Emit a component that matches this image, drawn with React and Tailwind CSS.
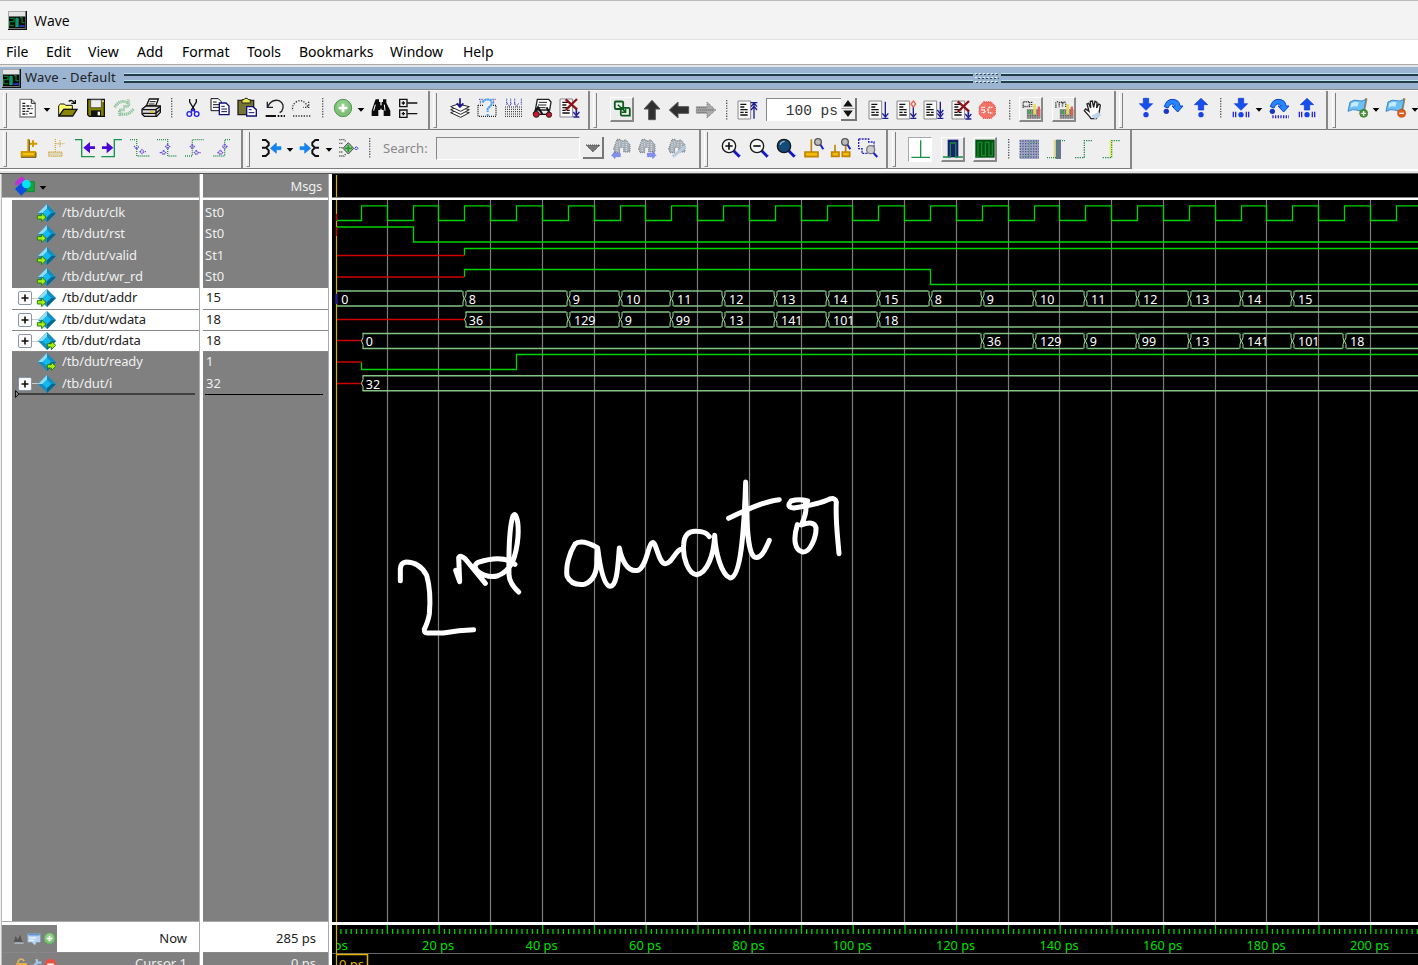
import React from "react";

/* ---------- shared pieces ---------- */

const Ic = ({ m = "", s = "w-5 h-5", children }) => (
  <svg className={`${m} ${s} shrink-0 overflow-visible`} viewBox="0 0 60 60" fill="none">
    {children}
  </svg>
);

const Caret = ({ m }) => (
  <svg className={`${m} mt-1 h-2 w-2 shrink-0`} viewBox="0 0 24 24">
    <path d="M2 6H22L12 17Z" fill="#000" />
  </svg>
);

const Handle = ({ m }) => (
  <div className={`${m} h-[35px] w-1 shrink-0 self-center border-b border-l border-r border-b-[#8a8a8a] border-l-white border-r-[#808080]`} />
);

const Sep = ({ m }) => (
  <svg className={`${m} h-5 w-[3px] shrink-0`} viewBox="0 0 3 20">
    <path d="M0.7 0V20" stroke="#555" strokeWidth="1.3" strokeDasharray="1.3 1.3" />
  </svg>
);

const Group = ({ w, children }) => (
  <div className={`${w} flex shrink-0 items-center border-b border-r-2 border-b-[#7a7a7a] border-r-[#888]`}>{children}</div>
);

const Btn = ({ m, children, sunken }) => (
  <div
    className={`${m} flex h-[25px] w-6 shrink-0 items-center justify-center border ${
      sunken ? "border-b-white border-r-white border-l-[#aaa] border-t-[#aaa] bg-white" : "border-b-2 border-r-2 border-b-[#888] border-r-[#888] border-l-white border-t-white bg-[#ececec]"
    }`}
  >
    {children}
  </div>
);

const WaveLogo = ({ c }) => (
  <svg className={`${c} shrink-0`} viewBox="0 0 57 57">
    <path d="M0 0H54V54H0Z" fill="#a8a8a8" />
    <path d="M3 3H52V15H3Z" fill="#e4e4e4" />
    <path d="M3 17H52V52H3Z" fill="#050808" />
    <path d="M5 22H18V32H5V44H18M23 22V46H31V22M36 20H42V35H50M36 46H50" stroke="#08752f" strokeWidth="4" fill="none" />
    <path d="M27 20V48" stroke="#12c5c9" strokeWidth="4" />
    <path d="M34 45H50" stroke="#2b2bd0" strokeWidth="5" />
    <path d="M55 0V56H0" stroke="#111" strokeWidth="4" fill="none" />
  </svg>
);

/* ---------- icon drawings ---------- */

const Page = () => (
  <>
    <path d="M3 3H41V57H3Z" fill="#f8f8f8" stroke="#888" strokeWidth="3" />
    <path d="M10 13H28M10 21H22M10 29H32M10 37H20M10 45H32M24 37H32" stroke="#111" strokeWidth="4" />
  </>
);
const NewDoc = () => (
  <>
    <path d="M6 4H40L52 16V57H6Z" fill="#fff" stroke="#808080" strokeWidth="4" />
    <path d="M40 4V16H52" stroke="#222" strokeWidth="3" />
    <path d="M13 16H25M13 24H40M13 32H22M28 32H44M13 40H32M13 48H28M34 46H46" stroke="#222" strokeWidth="4" strokeDasharray="9 3" />
  </>
);
const Open = () => (
  <>
    <path d="M2 53V23L7 18H19L23 22H43V34H18L3 53Z" fill="#ffff72" stroke="#111" strokeWidth="3" />
    <path d="M3 54L17 34H57L44 54Z" fill="#8a8505" stroke="#111" strokeWidth="4" />
    <path d="M32 10Q43 3 49 15M40 16H52V6" stroke="#111" strokeWidth="4" />
  </>
);
const Save = () => (
  <>
    <path d="M5 4H55V55H10L5 50Z" fill="#858000" stroke="#111" strokeWidth="4" />
    <path d="M14 5H46V29H14Z" fill="#efefef" stroke="#333" strokeWidth="2" />
    <path d="M15 37H45V55H15Z" fill="#111" />
    <path d="M35 41H42V52H35Z" fill="#fff" />
    <path d="M49 7H53V12H49Z" fill="#fff" />
  </>
);
const Refresh = () => (
  <g stroke="#8fc39a" strokeWidth="9" strokeDasharray="4 2">
    <path d="M2 28Q16 3 42 14M28 26L45 24L42 4" />
    <path d="M58 33Q42 56 18 46M32 35L16 36L18 55" />
  </g>
);
const Print = () => (
  <>
    <path d="M16 24L25 3H52L44 24Z" fill="#fff" stroke="#111" strokeWidth="4" />
    <path d="M26 11H44M23 18H41" stroke="#111" strokeWidth="3" />
    <path d="M3 34L15 24H58V43L47 55H10L3 48Z" fill="#ddd" stroke="#111" strokeWidth="4" />
    <path d="M5 35H44L57 26M5 46H45L57 35M45 35V54" stroke="#111" strokeWidth="4" />
    <path d="M27 42H38" stroke="#d7cf00" strokeWidth="5" />
  </>
);
const Cut = () => (
  <>
    <path d="M20 3V12L36 38M40 3V12L24 38" stroke="#111" strokeWidth="4" />
    <circle cx="19" cy="48" r="7" stroke="#2020f0" strokeWidth="4" />
    <circle cx="41" cy="48" r="7" stroke="#2020f0" strokeWidth="4" />
    <path d="M25 42L30 34L35 42" stroke="#2020f0" strokeWidth="4" />
  </>
);
const Copy = () => (
  <>
    <path d="M3 2H25L34 11V38H3Z" fill="#fff" stroke="#111" strokeWidth="3" />
    <path d="M9 12H20M9 20H27M9 28H27" stroke="#111" strokeWidth="3" />
    <path d="M28 15H48L57 24V50H28Z" fill="#fff" stroke="#10107c" strokeWidth="4" />
    <path d="M34 25H44M34 33H51M34 41H51" stroke="#10107c" strokeWidth="3" />
  </>
);
const Paste = () => (
  <>
    <path d="M3 7H50V50H3Z" fill="#767433" stroke="#222" strokeWidth="4" />
    <path d="M15 5H21L24 1H31L34 5H40V15H15Z" fill="#ece84a" stroke="#222" strokeWidth="3" />
    <path d="M29 26H48L58 35V54H29Z" fill="#fff" stroke="#10107c" strokeWidth="4" />
    <path d="M35 35H44M35 44H52" stroke="#10107c" strokeWidth="3" />
  </>
);
const Undo = () => (
  <>
    <path d="M8 26Q20 2 42 8Q62 18 50 40L44 44M7 11V28H24" stroke="#222" strokeWidth="4" />
    <path d="M2 54H33" stroke="#111" strokeWidth="6" />
    <path d="M38 54H60" stroke="#111" strokeWidth="6" strokeDasharray="5 4" />
  </>
);
const Redo = () => (
  <>
    <path d="M50 26Q38 2 18 10Q0 22 6 38M53 11V28H36" stroke="#333" strokeWidth="4" strokeDasharray="4 4" />
    <path d="M6 54H60" stroke="#333" strokeWidth="4" strokeDasharray="4 4" />
  </>
);
const Plus = () => (
  <>
    <circle cx="30" cy="30" r="26" fill="#7fc078" stroke="#4d9a4d" strokeWidth="3" />
    <circle cx="30" cy="24" r="18" fill="#9ad493" opacity=".6" />
    <path d="M30 17V43M17 30H43" stroke="#fff" strokeWidth="8" />
  </>
);
const Binoc = () => (
  <>
    <path d="M14 4H24V12H28V36H22V54H2V38L10 14ZM36 4H46V14L58 38V54H38V36H32V12H36Z" fill="#0a0a0a" />
    <path d="M24 22H36V32H24Z" fill="#0a0a0a" />
    <path d="M8 38L13 20M42 38L40 20" stroke="#fff" strokeWidth="3" />
  </>
);
const Tree = () => (
  <>
    <path d="M5 4H27V26H5ZM5 36H27V58H5Z" stroke="#111" strokeWidth="4" />
    <path d="M11 15H21M16 10V20M11 47H21M16 42V52M28 15H58M28 47H58" stroke="#111" strokeWidth="4" />
  </>
);
const Stack = () => (
  <>
    <path d="M2 44L24 36L58 44L32 58Z" fill="#fff" stroke="#222" strokeWidth="3" />
    <path d="M2 35L24 27L58 35L32 49Z" fill="#fff" stroke="#222" strokeWidth="3" />
    <path d="M2 26L24 18L58 26L32 40Z" fill="#fff" stroke="#222" strokeWidth="3" />
    <path d="M30 1V24M20 16L30 27L40 16" stroke="#17178f" strokeWidth="5" />
  </>
);
const Query = () => (
  <>
    <path d="M3 22H18M42 22H57V55H3V22" stroke="#222" strokeWidth="4" strokeDasharray="3 3" />
    <path d="M6 4H18M44 4H56M10 8V18M50 8V18" stroke="#3030a0" strokeWidth="3" strokeDasharray="3 2" />
    <path d="M16 13Q24 2 38 5Q48 12 42 22L32 32V42M32 48V56" stroke="#45a0ee" strokeWidth="6" strokeDasharray="7 1" />
  </>
);
const DotGrid = () => (
  <>
    <path d="M3 27H57M3 34H57M3 41H57M3 48H57M3 55H57" stroke="#222" strokeWidth="3" strokeDasharray="3 3" />
    <path d="M8 2V20M20 2V20M32 2V20M52 2V20M10 16L16 25L22 16M32 16L38 25L44 16" stroke="#3434b8" strokeWidth="3" strokeDasharray="3 2" />
  </>
);
const Profile = () => (
  <>
    <path d="M16 4H50L57 12L53 36H10Z" fill="#fff" stroke="#222" strokeWidth="4" />
    <path d="M21 13H45M18 21H43M16 29H41" stroke="#222" strokeWidth="3" />
    <path d="M4 48L18 28L31 48M44 28L52 44" stroke="#111" strokeWidth="6" />
    <circle cx="13" cy="49" r="9" fill="#d4122c" stroke="#222" strokeWidth="3" />
    <circle cx="51" cy="50" r="8" fill="#d4122c" stroke="#222" strokeWidth="3" />
    <path d="M22 49H44" stroke="#111" strokeWidth="4" />
  </>
);
const PageX = () => (
  <>
    <Page />
    <path d="M52 30V50" stroke="#1b1b96" strokeWidth="5" />
    <path d="M43 42L52 53L61 42M43 57H61" stroke="#1b1b96" strokeWidth="4" />
    <path d="M20 4L54 34M54 3L20 36" stroke="#8e1018" strokeWidth="7" />
  </>
);
const Run = ({ kind }) => (
  <>
    <Page />
    {kind === "up" ? (
      <path d="M51 56V6M41 8H61M42 20L51 9L60 20M42 30L51 19L60 30" stroke="#1b1b96" strokeWidth="4" />
    ) : (
      <path d="M52 5V48M43 40L52 51L61 40M43 55H61" stroke="#1b1b96" strokeWidth="4" />
    )}
    {kind === "diamond" && <path d="M52 3L59 12L52 21L45 12Z" fill="#fff" stroke="#ef5d50" strokeWidth="4" />}
    {kind === "double" && <path d="M43 30L52 41L61 30" stroke="#1b1b96" strokeWidth="4" />}
  </>
);
const Links = () => (
  <g stroke="#0c5a1c" strokeWidth="6">
    <path d="M6 8Q6 5 9 5H30Q34 5 34 9V30H9Q6 30 6 26Z" />
    <path d="M26 26H52Q56 26 56 30V52H30Q26 52 26 48Z" />
    <path d="M16 16L42 40M42 28V41H29" strokeWidth="5" />
  </g>
);
const Arrow = ({ dir }) => {
  const r = dir === "up" ? 0 : dir === "left" ? -90 : 90;
  return (
    <g transform={`rotate(${r} 30 30)`}>
      <path d="M30 1L54 27H40V59H20V27H6Z" fill={dir === "right" ? "#aaa" : "#303030"} stroke={dir === "right" ? "#777" : "#555"} strokeWidth="3" strokeDasharray={dir === "right" ? "3 3" : "0"} />
      {dir === "right" && <path d="M23 29V58M30 8V58M37 29V58" stroke="#666" strokeWidth="4" strokeDasharray="3 3" />}
    </g>
  );
};
const Stop = () => (
  <>
    <path d="M20 6H42L55 20V42L42 55H20L7 42V20Z" fill="#f07368" stroke="#ef5b50" strokeWidth="4" strokeDasharray="4 2" />
    <path d="M24 22H15V30H24V38H14M46 22H38Q33 24 33 31Q33 38 38 39H46" stroke="#fff" strokeWidth="4" strokeDasharray="5 2" />
  </>
);
const MemBtn = ({ two }) => (
  <>
    <path d={two ? "M3 26V9Q8 3 14 9V24M14 10Q20 3 25 10V24M25 10Q32 3 36 12V24" : "M4 26V6H25V22H4M32 6V22"} stroke="#333" strokeWidth="5" strokeDasharray="4 3" />
    <path d="M16 30H62V62H16Z" fill="#999" />
    <path d="M18 36H60M18 44H60M18 52H60M18 60H60" stroke="#555" strokeWidth="4" strokeDasharray="4 4" />
    <path d="M42 14V48" stroke="#e7dc56" strokeWidth="9" />
    <path d="M56 22V54" stroke="#e35e57" strokeWidth="8" />
    <path d="M20 36L30 46" stroke="#27b83c" strokeWidth="5" />
  </>
);
const Hand = () => (
  <>
    <path d="M20 50L4 32L8 27L18 34L12 12L17 10L23 24L22 4L28 3L32 22L36 4L42 7L41 24L47 12L52 15L48 40L40 56H24Z" fill="#fff" stroke="#222" strokeWidth="4" />
    <path d="M24 48L46 36L56 46L36 58Z" fill="#bfd2ea" />
  </>
);
const blue = "#164fee";
const StepDown = ({ bars, up }) => (
  <>
    <path d={up ? "M30 1L50 20H38V36H22V20H10Z" : "M22 1H38V17H50L30 37L10 17H22Z"} fill={blue} stroke="#103bc4" strokeWidth="2" />
    <circle cx="30" cy="50" r="8" fill="#1743e8" />
    {bars && <path d="M7 41V58M14 41V58M46 41V58M53 41V58" stroke="#2727dd" strokeWidth="4" />}
  </>
);
const StepOver = ({ bars }) => (
  <>
    <path d="M4 26Q10 3 30 4Q50 6 51 24H60L44 42L27 24H37Q34 17 26 18Q18 20 15 30Z" fill="#2588fa" stroke="#113fc9" strokeWidth="3" />
    <circle cx="10" cy="40" r="8" fill="#1737c5" />
    {bars && <path d="M10 56H60" stroke="#2727dd" strokeWidth="9" strokeDasharray="4 4" />}
  </>
);
const Flag = ({ del }) => (
  <>
    <path d="M55 1L46 48" stroke="#b9822f" strokeWidth="7" />
    <path d="M6 12Q20 3 32 8Q42 12 54 4L48 34Q38 44 26 36Q14 32 0 40Z" fill="#6dc0f2" stroke="#3f87c9" strokeWidth="3" />
    <path d="M10 16Q22 8 32 14L28 26Q18 22 8 29Z" fill="#c3eaff" />
    <circle cx="47" cy="46" r="12" fill={del ? "#e45c19" : "#4b9837"} stroke={del ? "#b8430c" : "#2f6f20"} strokeWidth="2" />
    <path d={del ? "M40 46H54" : "M40 46H54M47 39V53"} stroke="#fff" strokeWidth="4" />
  </>
);

const Cursor = ({ ghost }) => (
  <>
    <path
      d="M5 42H45V55H5ZM25 42V3M26 17H52M39 7V27"
      stroke={ghost ? "#d0a63b" : "#d09a00"}
      strokeWidth={ghost ? "4" : "6"}
      strokeDasharray={ghost ? "3 3" : "0"}
      fill={ghost ? "#ded8b8" : "#f6c20c"}
    />
    {!ghost && <path d="M3 58H48V43M28 5V40" stroke="#4b380b" strokeWidth="2.5" />}
  </>
);
const EdgeIn = ({ right }) => (
  <>
    <path d={right ? "M-2 56H37V5H60" : "M0 5H20V56H59"} stroke="#159447" strokeWidth="4" />
    <path d={right ? "M0 25H14V12L34 29L14 46V33H0Z" : "M60 25H45V12L25 29L45 46V33H60Z"} fill="#4807d6" />
  </>
);
const EdgeDot = ({ d, a }) => (
  <>
    <path d={d} stroke="#269252" strokeWidth="4" strokeDasharray="3 3" />
    <path d={a} stroke="#7550e2" strokeWidth="4" strokeDasharray="4 2" />
  </>
);
const Merge = ({ right }) => (
  <g transform={right ? "translate(60 0) scale(-1 1)" : undefined}>
    <path d="M3 6H14L23 14V22L15 29H3M15 29L23 37V46L14 54H3" stroke="#111" strokeWidth="6" />
    <path d="M60 26H46V15L28 31L46 46V35H60Z" fill="#1482ef" stroke="#1482ef" strokeWidth="2" />
  </g>
);
const MergeDots = () => (
  <>
    <path d="M4 5H18L24 12M4 16H16M4 42H16M4 54H18L24 47M4 29H16" stroke="#333" strokeWidth="4" strokeDasharray="3 3" />
    <path d="M31 14L47 31L31 48L15 31Z" fill="#8fcf8c" stroke="#444" strokeWidth="3" />
    <path d="M31 20V42M20 31H42" stroke="#2d943a" strokeWidth="5" />
    <path d="M55 26L60 31L55 36L50 31Z" stroke="#3636df" strokeWidth="3" />
  </>
);
const GhostFind = ({ kind }) => (
  <>
    <path d="M8 32L18 4H28L32 10L44 5L57 20V42H38V28H26V44H12Z" fill="#a6b0b6" stroke="#70787c" strokeWidth="3" strokeDasharray="3 3" />
    <path d="M18 12V40M26 10V26M36 12V28M46 12V40" stroke="#e5eaee" strokeWidth="3" strokeDasharray="3 3" />
    {kind === "l" && <path d="M2 52L12 40V46H28V56H12V62Z" fill="#8390ee" stroke="#545be9" strokeWidth="2" strokeDasharray="3 2" />}
    {kind === "r" && <path d="M60 52L50 40V46H34V56H50V62Z" fill="#8390ee" stroke="#545be9" strokeWidth="2" strokeDasharray="3 2" />}
    {kind === "t" && <path d="M20 56L58 26" stroke="#b8ccdf" strokeWidth="9" />}
  </>
);
const Lens = ({ sign, full }) => (
  <>
    <path d="M38 38L56 56" stroke="#1616c8" strokeWidth="9" />
    <path d="M43 37L58 52" stroke="#8ea1ef" strokeWidth="3" />
    <circle cx="24" cy="24" r="20" fill={full ? "#124a78" : "#f7f7f7"} stroke="#171717" strokeWidth="4" />
    {full ? <path d="M12 20Q16 10 26 10" stroke="#90b6cf" strokeWidth="4" /> : <path d={sign === "+" ? "M24 13V35M13 24H35" : "M13 24H35"} stroke="#111" strokeWidth="5" />}
  </>
);
const CursorLens = ({ two }) => (
  <>
    <path d={two ? "M2 42H24V55H2ZM12 42V20M34 42H56V55H34ZM44 42V20" : "M3 42H42V56H3ZM22 42V4"} fill="#f2bc0d" stroke="#c08300" strokeWidth="5" />
    <path d="M48 18L58 34" stroke="#1c1cdb" strokeWidth="6" />
    <circle cx="42" cy="12" r="10" fill="#bbb" stroke="#555" strokeWidth="4" />
  </>
);
const RegionLens = () => (
  <>
    <path d="M2 3H32V12H48V30M2 3V32H12V46H30" stroke="#2525b8" strokeWidth="4" strokeDasharray="6 3" />
    <path d="M44 42L58 57" stroke="#1c1cdb" strokeWidth="6" />
    <circle cx="38" cy="35" r="12" fill="#ccc" stroke="#777" strokeWidth="4" />
  </>
);

/* ---------- left pane ---------- */

const Gem = ({ dir }) => (
  <svg className="h-5 w-5 shrink-0" viewBox="0 0 60 60">
    <path d="M33 3L60 30L33 57L6 30Z" fill="#168dbd" />
    <path d="M33 3L6 30L20 30L33 17Z" fill="#8edcf4" />
    <path d="M33 17L46 30L33 43L20 30Z" fill="#11baf0" />
    <path d="M33 57L60 30H46L33 43Z" fill="#08678f" />
    {dir === "in" && <path d="M4 38H17V30L30 43L17 56V48H4Z" fill="#a6ef12" stroke="#287e18" strokeWidth="3" />}
    {dir === "out" && <path d="M34 38H46V30L59 43L46 56V48H34Z" fill="#a6ef12" stroke="#287e18" strokeWidth="3" />}
  </svg>
);

const signals = [
  { name: "/tb/dut/clk", v: "St0", dir: "in" },
  { name: "/tb/dut/rst", v: "St0", dir: "in" },
  { name: "/tb/dut/valid", v: "St1", dir: "in" },
  { name: "/tb/dut/wr_rd", v: "St0", dir: "in" },
  { name: "/tb/dut/addr", v: "15", dir: "in", bus: true, sel: true },
  { name: "/tb/dut/wdata", v: "18", dir: "in", bus: true, sel: true },
  { name: "/tb/dut/rdata", v: "18", dir: "out", bus: true, sel: true },
  { name: "/tb/dut/ready", v: "1", dir: "out" },
  { name: "/tb/dut/i", v: "32", dir: "", bus: true },
];

const rowCls = (sel) => (sel ? "bg-white text-[#222] border-b border-[#888]" : "text-[#efefef] border-b border-transparent");

/* ---------- waveform ---------- */

const X = (t) => Math.floor(335.45 + t * 5.175) + 0.5;
const END = 1420;
const grid = Array.from({ length: 20 }, (_, i) => X((i + 1) * 10));

let clk = `M336 220.5`;
for (let t = 5; t <= 205; t += 10) clk += `H${X(t)}V205.8H${X(t + 5)}V220.5`;

const Bus = ({ y, from, vals }) => (
  <g>
    <path d={`M${from === 0 ? 337 : X(from) + 1} ${y}H${END}M${from === 0 ? 337 : X(from) + 1} ${y + 15}H${END}`} stroke="#84c485" strokeWidth="1.5" />
    {vals.map(([t, v]) => {
      const x = t === 0 ? 337 : X(t);
      return (
        <g key={t}>
          {t !== from && <path d={`M${x - 2} ${y}h4M${x - 2} ${y + 15}h4`} stroke="#000" strokeWidth="2" />}
          {t !== from && <path d={`M${x - 1.5} ${y}V${y + 4}L${x - 0.5} ${y + 7.5}L${x - 1.5} ${y + 11}V${y + 15}`} stroke="#98e59a" fill="none" />}
          {t !== 0 && <path d={`M${x + 1.5} ${y}V${y + 4}L${x} ${y + 7.5}L${x + 1.5} ${y + 11}V${y + 15}`} stroke="#98e59a" fill="none" />}
          <text x={x + (v.length > 1 && v[0] === "1" ? 5.5 : 4.3)} y={y + 12.7} fill="#fff" fontSize="13" textLength={v.length * 7.15} lengthAdjust="spacingAndGlyphs">
            {v}
          </text>
        </g>
      );
    })}
  </g>
);

const addr = [[0, "0"], [25, "8"], [45, "9"], [55, "10"], [65, "11"], [75, "12"], [85, "13"], [95, "14"], [105, "15"], [115, "8"], [125, "9"], [135, "10"], [145, "11"], [155, "12"], [165, "13"], [175, "14"], [185, "15"]];
const wdata = [[25, "36"], [45, "129"], [55, "9"], [65, "99"], [75, "13"], [85, "141"], [95, "101"], [105, "18"]];
const rdata = [[5, "0"], [125, "36"], [135, "129"], [145, "9"], [155, "99"], [165, "13"], [175, "141"], [185, "101"], [195, "18"]];

/* freehand pen annotation */
const Ink = () => (
  <g transform="translate(380 460) scale(.33333)" stroke="#fff" strokeWidth="15" strokeLinecap="round" strokeLinejoin="round" fill="none">
    <path d="M61 362V327Q62 308 78 306Q119 306 140 346Q154 394 148 462Q145 482 133 508Q132 519 142 519H190Q238 510 281 509" />
    <path d="M227 331L239 365L236 293Q242 284 255 296L316 370M405 313Q371 283 294 307Q276 318 296 336Q321 354 352 348Q390 333 403 291Q419 235 413 186Q407 154 399 168Q385 210 387 344Q387 368 416 396" />
    <path d="M652 263Q604 236 585 252C567 280 557 320 561 348Q573 377 613 373Q653 359 651 294L653 264C660 320 670 370 687 378C712 388 714 310 718 264C724 294 740 338 774 331C801 320 803 252 818 248C828 244 836 310 855 311C875 313 887 269 904 268" />
    <path d="M988 230Q978 214 950 214Q913 211 911 254C907 292 925 342 950 344C982 339 1002 283 1004 226C1006 275 1024 345 1051 354C1083 350 1092 215 1097 66C1098 160 1100 275 1123 291C1144 300 1157 265 1168 241M1046 175Q1148 124 1198 119" />
    <path d="M1283 123Q1258 115 1233 123Q1217 142 1242 144Q1320 132 1349 117Q1366 112 1369 126C1366 180 1373 230 1377 281M1273 121C1284 143 1276 170 1264 195Q1302 180 1308 203C1309 230 1291 278 1268 276C1245 272 1238 240 1252 194" />
  </g>
);

export default function App() {
  return (
    <div className="flex h-[965px] w-[1418px] flex-col overflow-hidden bg-[#efefef] font-['Noto_Sans',sans-serif] text-[13px] text-black">
      <div className="flex h-10 shrink-0 items-center border-b border-t border-b-[#e2e2e2] border-t-[#bbb] bg-[#f3f3f3] pl-2">
        <WaveLogo c="h-[19px] w-[19px]" />
        <span className="ml-[7px] font-['Open_Sans',sans-serif] text-[14px]">Wave</span>
      </div>

      <div className="flex h-[25px] shrink-0 items-center gap-[17px] border-b border-[#aaa] bg-white pb-px pl-1.5 text-[14px] leading-none">
        <span className="w-[23px]">File</span>
        <span className="w-[25px]">Edit</span>
        <span className="w-[32px]">View</span>
        <span className="w-[28px]">Add</span>
        <span className="w-[48px]">Format</span>
        <span className="w-[35px]">Tools</span>
        <span className="w-[74px]">Bookmarks</span>
        <span className="w-[56px]">Window</span>
        <span>Help</span>
      </div>

      <div className="flex h-[25px] shrink-0 items-center border-b border-t-2 border-b-[#888] border-t-[#e4e4e4] bg-[#9ab4d2] pl-0.5">
        <WaveLogo c="h-[19px] w-[19px]" />
        <span className="ml-1 w-[99px] shrink-0 tracking-[0.15px] text-[#222]">Wave - Default</span>
        <div className="h-3 w-[849px] shrink-0 py-px">
          <div className="mb-1 h-[3px] border-b-2 border-t border-b-[#263a48] border-t-[#b5e2f0]" />
          <div className="h-[3px] border-b-2 border-t border-b-[#263a48] border-t-[#b5e2f0]" />
        </div>
        <svg className="mx-0.5 h-3 w-6 shrink-0" viewBox="0 0 24 12">
          <path d="M0 1.5H24M0 5.5H24M0 9.5H24" stroke="#e4f2fb" strokeDasharray="2 2" />
          <path d="M1 2.5H24M3 6.5H24M1 10.5H24" stroke="#344a5c" strokeDasharray="2 2" />
        </svg>
        <div className="h-3 grow py-px">
          <div className="mb-1 h-[3px] border-b-2 border-t border-b-[#263a48] border-t-[#b5e2f0]" />
          <div className="h-[3px] border-b-2 border-t border-b-[#263a48] border-t-[#b5e2f0]" />
        </div>
      </div>

      {/* toolbar row 1 */}
      <div className="flex h-10 shrink-0 items-stretch border-t border-white">
        <Group w="w-[430px]">
          <Handle m="ml-[3px]" />
          <div className="flex items-center pb-[5px]">
            <Ic m="ml-[11px]"><NewDoc /></Ic>
            <Caret m="ml-[5px]" />
            <Ic m="ml-[7px]"><Open /></Ic>
            <Ic m="ml-2"><Save /></Ic>
            <Ic m="ml-2"><Refresh /></Ic>
            <Ic m="ml-[7px]"><Print /></Ic>
            <Sep m="ml-[10px]" />
            <Ic m="ml-[9px]"><Cut /></Ic>
            <Ic m="ml-[7px]"><Copy /></Ic>
            <Ic m="ml-[7px]"><Paste /></Ic>
            <Ic m="ml-2"><Undo /></Ic>
            <Ic m="ml-1.5"><Redo /></Ic>
            <Sep m="ml-[11px]" />
            <Ic m="ml-2"><Plus /></Ic>
            <Caret m="ml-1" />
            <Ic m="ml-1.5"><Binoc /></Ic>
            <Ic m="ml-[7px]"><Tree /></Ic>
          </div>
        </Group>
        <Group w="w-[160px]">
          <Handle m="ml-[3px]" />
          <div className="flex items-center pb-[5px]">
            <Ic m="ml-[13px]"><Stack /></Ic>
            <Ic m="ml-[7px]"><Query /></Ic>
            <Ic m="ml-[7px]"><DotGrid /></Ic>
            <Ic m="ml-2"><Profile /></Ic>
            <Ic m="ml-[7px]"><PageX /></Ic>
          </div>
        </Group>
        <Group w="w-[526px]">
          <Handle m="ml-[3px]" />
          <div className="flex items-center pb-px">
            <Btn m="ml-[13px]"><Ic s="w-[18px] h-[18px]"><Links /></Ic></Btn>
            <Ic m="ml-2"><Arrow dir="up" /></Ic>
            <Ic m="ml-[7px]"><Arrow dir="left" /></Ic>
            <Ic m="ml-[7px]"><Arrow dir="right" /></Ic>
            <Sep m="ml-[10px]" />
            <Ic m="ml-2"><Run kind="up" /></Ic>
            <div className="ml-[9px] flex h-[23px] w-[75px] shrink-0 items-center justify-end border-l border-t border-[#888] bg-white pr-[3px] pt-1 font-['Liberation_Mono',monospace] text-[14.5px] text-[#333]">
              100 ps
            </div>
            <div className="flex h-[23px] w-4 shrink-0 flex-col border-b-2 border-r-2 border-[#777]">
              <svg className="h-full w-full" viewBox="0 0 14 22">
                <path d="M2 9H12L7 2Z M2 13H12L7 20Z" fill="#111" />
                <path d="M0 11H14" stroke="#999" />
              </svg>
            </div>
            <Ic m="ml-[11px]"><Run /></Ic>
            <Ic m="ml-2"><Run kind="diamond" /></Ic>
            <Ic m="ml-[7px]"><Run kind="double" /></Ic>
            <Ic m="ml-2"><PageX /></Ic>
            <Ic m="ml-1.5"><Stop /></Ic>
            <Sep m="ml-3" />
            <Btn m="ml-[7px]"><Ic s="w-[18px] h-[18px]"><MemBtn /></Ic></Btn>
            <Btn m="ml-[9px]"><Ic s="w-[18px] h-[18px]"><MemBtn two /></Ic></Btn>
            <Ic m="ml-[7px]"><Hand /></Ic>
          </div>
        </Group>
        <Group w="w-[212px]">
          <Handle m="ml-[3px]" />
          <div className="flex items-center pb-1">
            <Ic m="ml-[13px]"><StepDown /></Ic>
            <Ic m="ml-[7px]"><StepOver /></Ic>
            <Ic m="ml-2"><StepDown up /></Ic>
            <Sep m="ml-[9px]" />
            <Ic m="ml-2"><StepDown bars /></Ic>
            <Caret m="ml-1" />
            <Ic m="ml-1.5"><StepOver bars /></Ic>
            <Ic m="ml-2"><StepDown up bars /></Ic>
          </div>
        </Group>
        <div className="flex grow items-center overflow-hidden border-b border-[#7a7a7a]">
          <Handle m="ml-1" />
          <div className="flex items-center pb-1">
            <Ic m="ml-3"><Flag /></Ic>
            <Caret m="ml-1" />
            <Ic m="ml-1.5"><Flag del /></Ic>
            <Caret m="ml-[5px]" />
          </div>
        </div>
      </div>

      {/* toolbar row 2 */}
      <div className="flex h-[39px] shrink-0 items-stretch">
        <Group w="w-[243px]">
          <Handle m="ml-[3px]" />
          <div className="flex items-center pb-0.5">
            <Ic m="ml-[13px]"><Cursor /></Ic>
            <Ic m="ml-[7px]"><Cursor ghost /></Ic>
            <Ic m="ml-2"><EdgeIn /></Ic>
            <Ic m="ml-[7px]"><EdgeIn right /></Ic>
            <Ic m="ml-2"><EdgeDot d="M0 5H20V54H60" a="M12 24L20 33L28 24M30 41L36 35L42 41L36 47ZM44 41H50" /></Ic>
            <Ic m="ml-[7px]"><EdgeDot d="M0 5H32V54H60" a="M8 44H14M20 38L26 44L20 50L14 44ZM32 20L38 26L32 32L26 26Z" /></Ic>
            <Ic m="ml-2"><EdgeDot d="M0 54H22V5H56" a="M22 20L28 26L22 32L16 26ZM34 38L40 44L34 50L28 44ZM40 44H48" /></Ic>
            <Ic m="ml-[7px]"><EdgeDot d="M4 54H38V5H56" a="M18 44L25 37L32 44L25 50ZM38 19L45 26L38 33L31 26Z" /></Ic>
          </div>
        </Group>
        <Group w="w-[458px]">
          <Handle m="ml-[3px]" />
          <div className="flex items-center pb-0.5">
            <Ic m="ml-[11px]"><Merge /></Ic>
            <Caret m="ml-[5px]" />
            <Ic m="ml-1.5"><Merge right /></Ic>
            <Caret m="ml-[5px]" />
            <Ic m="ml-[5px]"><MergeDots /></Ic>
            <Sep m="ml-[11px]" />
            <span className="ml-[11px] w-[46px] shrink-0 pt-px text-[#888]">Search:</span>
            <div className="ml-[7px] h-[23px] w-[144px] shrink-0 border border-b-white border-r-white border-l-[#888] border-t-[#888]" />
            <div className="ml-[3px] flex h-[22px] w-[21px] shrink-0 items-center justify-center border-b-2 border-r-2 border-[#777] bg-[#eee] pt-1">
              <svg className="h-3 w-4" viewBox="0 0 16 12"><path d="M1 2H15L8 9Z" fill="#777" stroke="#444" strokeDasharray="1 1" /></svg>
            </div>
            <Ic m="ml-[7px]"><GhostFind kind="l" /></Ic>
            <Ic m="ml-[5px]"><GhostFind kind="r" /></Ic>
            <Ic m="ml-[10px]"><GhostFind kind="t" /></Ic>
          </div>
        </Group>
        <Group w="w-[187px]">
          <Handle m="ml-[3px]" />
          <div className="flex items-center pb-0.5">
            <Ic m="ml-[13px]"><Lens sign="+" /></Ic>
            <Ic m="ml-2"><Lens sign="-" /></Ic>
            <Ic m="ml-[7px]"><Lens full /></Ic>
            <Ic m="ml-2"><CursorLens /></Ic>
            <Ic m="ml-[7px]"><CursorLens two /></Ic>
            <Ic m="ml-[7px]"><RegionLens /></Ic>
          </div>
        </Group>
        <Group w="w-[244px]">
          <Handle m="ml-1" />
          <Btn m="ml-3" sunken><Ic><path d="M4 55H60M32 4V55" stroke="#159447" strokeWidth="4" /></Ic></Btn>
          <Btn m="ml-[9px]">
            <Ic>
              <path d="M14 2H46V55H14Z" fill="#18216e" />
              <path d="M0 54H22V12H38V54H60" stroke="#138a42" strokeWidth="4" />
            </Ic>
          </Btn>
          <Btn m="ml-2">
            <Ic>
              <path d="M1 2H59V56H1Z" fill="#035010" />
              <path d="M2 54H9V10H20V50H31V10H42V50H52V10" stroke="#138a30" strokeWidth="4" />
            </Ic>
          </Btn>
          <Sep m="ml-[11px]" />
          <Ic m="ml-2">
            <path d="M2 2H60V60H2Z" fill="#a2a5c4" />
            <path d="M2 6H60M2 14H60M2 22H60M2 30H60M2 38H60M2 46H60M2 54H60" stroke="#50558f" strokeWidth="4" strokeDasharray="4 4" />
            <path d="M2 52H30V10H58" stroke="#58a276" strokeWidth="4" strokeDasharray="4 3" />
          </Ic>
          <Ic m="ml-2">
            <path d="M26 2H42V60H26Z" fill="#6b7392" />
            <path d="M22 3V58" stroke="#eae05a" strokeWidth="4" />
            <path d="M0 56H30V5H56" stroke="#269252" strokeWidth="4" strokeDasharray="3 3" />
          </Ic>
          <Ic m="ml-2"><path d="M0 56H28V5H54" stroke="#269252" strokeWidth="4" strokeDasharray="4 3" /></Ic>
          <Ic m="ml-[7px]">
            <path d="M25 3V56" stroke="#f5ed3c" strokeWidth="4" />
            <path d="M2 56H29V5H56" stroke="#269252" strokeWidth="4" strokeDasharray="4 3" />
          </Ic>
        </Group>
      </div>
      <div className="h-[5px] shrink-0 border-b border-t-2 border-b-[#555] border-t-white bg-[#e2e2e2]" />

      {/* panes */}
      <div className="flex min-h-0 grow bg-white">
        <div className="w-0.5 shrink-0 border-r border-[#bbb] bg-[#eee]" />
        <div className="flex w-[198px] shrink-0 flex-col border-r border-[#aaa]">
          <div className="flex h-[23px] shrink-0 items-center bg-[#808080]">
            <svg className="ml-3 h-5 w-[22px]" viewBox="0 0 66 60">
              <path d="M24 1L40 17L32 24L24 17L13 26H2L6 16Z" fill="#c32bdd" />
              <path d="M40 17H61V47H30V35H42Z" fill="#12a63e" stroke="#08772a" strokeWidth="2" />
              <path d="M22 20L41 39L22 59L3 39Z" fill="#0a4de0" />
              <circle cx="37" cy="24" r="13" fill="#06e1f8" />
            </svg>
            <Caret m="ml-[3px]" />
          </div>
          <div className="h-[3px] shrink-0 border-t border-[#bbb] bg-white" />
          <div className="flex h-[722px] shrink-0 flex-col border-b border-[#aaa] pl-[10px]">
            <div className="grow bg-[#808080] pt-[3px]">
              {signals.map((s) => (
                <div key={s.name} className={`flex h-[21.33px] items-center ${rowCls(s.sel)}`}>
                  <div className="flex w-6 shrink-0 items-center pl-1.5">
                    {s.bus && (
                      <>
                        <svg className="h-[14px] w-[14px] shrink-0" viewBox="0 0 14 14">
                          <rect x=".5" y=".5" width="13" height="13" rx="1.5" fill="#fafafa" stroke="#8996a8" />
                          <path d="M3.5 7H10.5M7 3.5V10.5" stroke="#111" strokeWidth="1.6" />
                        </svg>
                        <div className="h-px w-2 shrink-0 bg-[#ccc]" />
                      </>
                    )}
                  </div>
                  <Gem dir={s.dir} />
                  <span className="mb-px ml-1.5 leading-none tracking-[-0.12px]">{s.name}</span>
                </div>
              ))}
              <svg className="-mt-[5px] h-2 w-[186px]" viewBox="0 0 186 8">
                <path d="M3.5 0.5V7.5L7 4Z" fill="none" stroke="#111" />
                <path d="M7 4H183" stroke="#000" strokeWidth="1.2" />
              </svg>
            </div>
          </div>
          <div className="h-[3px] shrink-0 bg-white" />
          <div className="flex h-[28px] shrink-0 items-center border-b border-[#888]">
            <div className="flex h-full w-[55px] items-center gap-0.5 bg-[#808080] pl-[11px]">
              <svg className="h-3 w-3" viewBox="0 0 36 36"><path d="M2 30L8 8L14 20L22 5L27 24L34 30Z" fill="#555" /><path d="M4 30H32" stroke="#aeb8c4" strokeWidth="5" /></svg>
              <svg className="h-[14px] w-[14px]" viewBox="0 0 42 42"><path d="M2 5H40V31H28L24 40L14 31H2Z" fill="#b4d3f5" /><path d="M4 8H38" stroke="#5c92d3" strokeWidth="5" /><path d="M7 18H28M7 25H22" stroke="#fff" strokeWidth="3" /></svg>
              <svg className="h-[13px] w-[13px]" viewBox="0 0 60 60"><Plus /></svg>
            </div>
            <span className="grow pr-3 text-right text-[#222]">Now</span>
          </div>
          <div className="flex h-[22px] shrink-0 items-center bg-[#808080]">
            <div className="flex w-[55px] shrink-0 items-center gap-0.5 pl-[13px]">
              <svg className="h-[14px] w-[14px]" viewBox="0 0 42 42"><path d="M10 20V12Q20 -2 30 12" stroke="#dfb75d" strokeWidth="5" fill="none" /><path d="M4 18H38V40H4Z" fill="#eab14b" /></svg>
              <svg className="h-[14px] w-[13px]" viewBox="0 0 42 42"><path d="M2 38L25 16M22 4L26 16L40 16" stroke="#a5c7ec" strokeWidth="8" fill="none" /></svg>
              <svg className="h-[13px] w-[13px] shrink-0" viewBox="0 0 60 60"><circle cx="30" cy="30" r="27" fill="#e75245" /><path d="M15 30H45" stroke="#fff" strokeWidth="9" /></svg>
            </div>
            <span className="grow pr-3 text-right text-[#eee]">Cursor 1</span>
          </div>
        </div>

        <div className="ml-[3px] flex w-[126px] shrink-0 flex-col border-r border-[#aaa]">
          <div className="flex h-[23px] shrink-0 items-center justify-end bg-[#808080] pr-1.5 pt-0.5 tracking-[-0.2px] text-[#efefef]">Msgs</div>
          <div className="h-[3px] shrink-0 border-t border-[#bbb] bg-white" />
          <div className="flex h-[722px] shrink-0 flex-col border-b border-[#aaa] bg-[#808080] pt-[3px]">
            {signals.map((s) => (
              <div key={s.name} className={`flex h-[21.33px] shrink-0 items-center pb-px leading-none ${s.v[0] === "S" ? "pl-0.5" : "pl-[3px]"} ${rowCls(s.sel)}`}>
                {s.v}
              </div>
            ))}
            <div className="-mt-px ml-0.5 h-px w-[118px] shrink-0 bg-black" />
          </div>
          <div className="h-[3px] shrink-0 bg-white" />
          <div className="flex h-[28px] shrink-0 items-center justify-end border-b border-[#888] pr-3 text-[#222]">285 ps</div>
          <div className="flex h-[22px] shrink-0 items-center justify-end bg-[#808080] pr-3 text-[#eee]">0 ps</div>
        </div>

        <div className="ml-[3px] flex w-[1086px] shrink-0 flex-col">
          <svg className="h-[23px] w-[1086px] shrink-0 bg-black" viewBox="332 174 1086 23">
            <path d="M336.5 175V197" stroke="#d7ab00" strokeWidth="1.2" />
          </svg>
          <div className="h-[3px] shrink-0 border-t border-[#888] bg-white" />
          <svg className="h-[722px] w-[1086px] shrink-0 bg-black" viewBox="332 200 1086 722" fill="none">
            {grid.map((x) => (
              <path key={x} d={`M${x} 200V922`} stroke="#7c7c7c" strokeWidth="1.2" />
            ))}
            <path d={clk} stroke="#00d400" strokeWidth="1.3" />
            <path d={`M336 227H${X(15)}V242H${END}M${X(25)} 255.5V248.5H${END}M${X(25)} 277V269.5H${X(115)}V284.5H${END}M${X(5)} 362V369.5H${X(35)}V354.5H${END}`} stroke="#00d400" strokeWidth="1.3" />
            <path d={`M336 255.5H${X(25)}M336 277H${X(25)}M336 319.5H${X(25)}M336 340.5H${X(5)}M336 362H${X(5)}M336 383.5H${X(5)}`} stroke="#d00000" strokeWidth="1.3" />
            <Bus y={291} from={0} vals={addr} />
            <Bus y={312} from={25} vals={wdata} />
            <Bus y={333.5} from={5} vals={rdata} />
            <Bus y={375.8} from={5} vals={[[5, "32"]]} />
            <path d="M336.5 200V922" stroke="#d7ab00" strokeWidth="1.2" />
            <path d="M336.5 214V221M336.5 227V236" stroke="#d40000" strokeWidth="1.2" />
            <path d="M336.5 294V304" stroke="#2a18a8" strokeWidth="2" />
            <Ink />
          </svg>
          <div className="h-[3px] shrink-0 bg-white" />
          <svg className="h-[40px] w-[1086px] shrink-0 bg-black" viewBox="332 925 1086 40" fontSize="13">
            <path d={Array.from({ length: 209 }, (_, i) => `M${(335.7 + (i + 1) * 5.175).toFixed(1)} ${(i + 1) % 10 ? 929 : 925}V934`).join("")} stroke="#00d000" strokeWidth="1.3" />
            <svg x="337" y="925" width="60" height="28">
              <text x="-15" y="25" fill="#00e000" textLength="26" lengthAdjust="spacingAndGlyphs">0 ps</text>
            </svg>
            {Array.from({ length: 10 }, (_, i) => (i + 1) * 20).map((t) => (
              <text key={t} x={335.6 + t * 5.175 - 1} y="949.7" fill="#00e000" textAnchor="middle" textLength={t < 100 ? 32 : 39} lengthAdjust="spacingAndGlyphs">
                {t} ps
              </text>
            ))}
            <path d="M332 953.5H1418" stroke="#666" />
            <path d="M336.5 925V965" stroke="#d7ab00" strokeWidth="1.2" />
            <path d="M337 954.5H367.5V966" stroke="#e0b400" strokeWidth="1.5" fill="none" />
            <text x="339" y="969" fill="#e0b400" textLength="25" lengthAdjust="spacingAndGlyphs">0 ps</text>
          </svg>
        </div>
      </div>
    </div>
  );
}
